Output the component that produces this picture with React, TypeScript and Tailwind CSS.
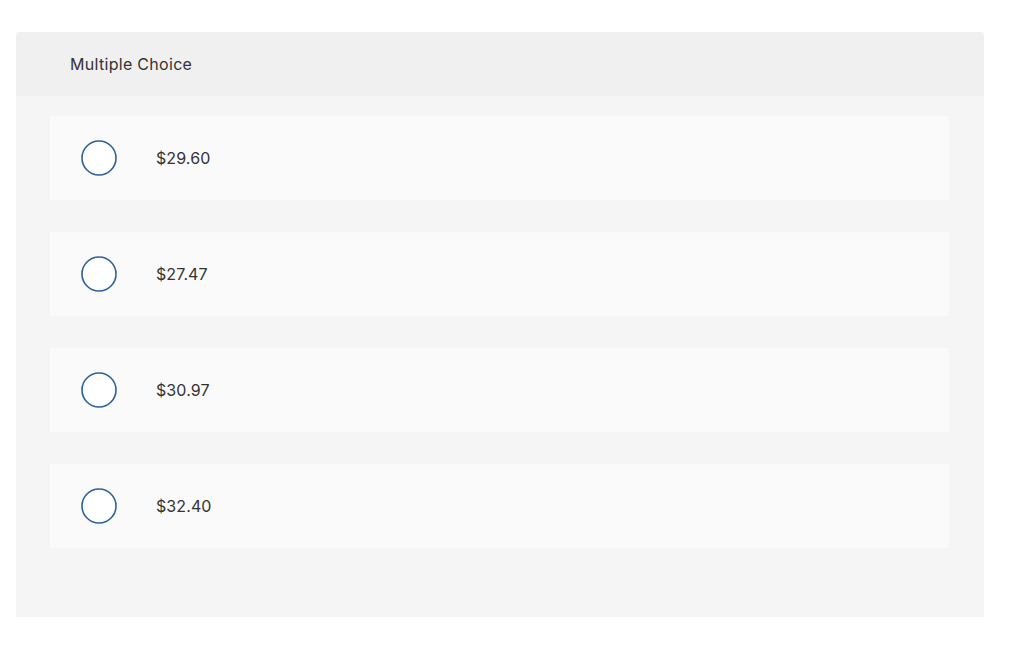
export default function App() {
  const options = ["$29.60", "$27.47", "$30.97", "$32.40"];
  return (
    <div className="w-[1024px] h-[655px] bg-white pt-[32px] pl-[16px]" style={{ fontFamily: "Inter, Lato, sans-serif" }}>
      <div className="w-[968px] h-[585px] rounded-[3px] bg-[#f5f5f5] overflow-hidden flex flex-col">
        <div className="h-[64px] bg-[#f0f0f0] flex items-center pl-[54px] text-[16px] text-[#333333] tracking-[0.3px]">
          Multiple Choice
        </div>
        <div className="flex flex-col gap-[32px] pt-[20px] pl-[34px] pr-[35px]">
          {options.map((o) => (
            <div key={o} className="h-[84px] bg-[#fafafa] rounded-[3px] flex items-center pl-[31px]">
              <svg width="36" height="36" viewBox="0 0 36 36" className="shrink-0">
                <circle cx="18" cy="18" r="17" fill="#ffffff" stroke="#2c6199" strokeWidth="1.6" />
              </svg>
              <span className="ml-[39px] text-[16px] text-[#333333] tracking-[0.1px]">{o}</span>
            </div>
          ))}
        </div>
      </div>
    </div>
  );
}
